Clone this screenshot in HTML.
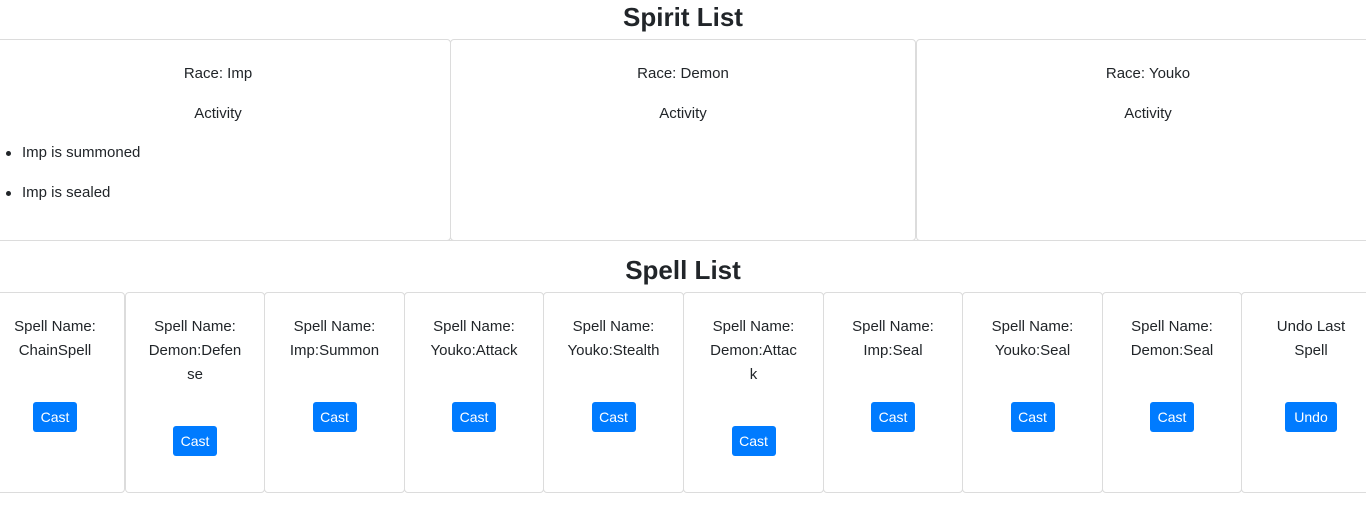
<!DOCTYPE html>
<html><head><style>
body{margin:0;width:1366px;height:508px;overflow:hidden;background:#fff;font-family:"Liberation Sans",sans-serif;color:#212529;position:relative}
h1{position:absolute;left:0;width:1366px;margin:0;text-align:center;font-size:26px;font-weight:bold;line-height:34px}
.card{position:absolute;border:1px solid #dcdcdc;border-radius:4px;box-sizing:border-box;background:#fff}
.t{position:absolute;left:0;right:0;text-align:center;font-size:15px;line-height:24px}
.btn{position:absolute;left:50%;transform:translateX(-50%);background:#007bff;color:#fff;font-size:14px;line-height:30px;height:30px;border-radius:3px;text-align:center}
li{position:absolute;left:22px;font-size:15px;line-height:24px;white-space:nowrap}
li:before{content:"";position:absolute;left:-16px;top:10px;width:5px;height:5px;border-radius:50%;background:#212529}
</style></head><body>
<h1 style="top:0">Spirit List</h1>
<div class="card" style="left:-15px;top:39px;width:466px;height:202px">
<div class="t" style="top:22px">Race: Imp</div>
<div class="t" style="top:62px">Activity</div>
</div>
<div style="position:absolute;left:0;top:0;list-style:none">
<li style="top:141px">Imp is summoned</li>
<li style="top:181px">Imp is sealed</li>
</div>
<div class="card" style="left:450px;top:39px;width:466px;height:202px">
<div class="t" style="top:22px">Race: Demon</div>
<div class="t" style="top:62px">Activity</div>
</div>
<div class="card" style="left:916px;top:39px;width:464px;height:202px">
<div class="t" style="top:22px">Race: Youko</div>
<div class="t" style="top:62px">Activity</div>
</div>
<div style="position:absolute;left:0;top:240px;width:1366px;height:1px;background:#dcdcdc"></div>
<h1 style="top:253px">Spell List</h1>
<div class="card" style="left:-15px;top:292px;width:140px;height:201px"><div class="t" style="top:22px">Spell Name:<br>ChainSpell</div><div class="btn" style="top:109px;width:44px">Cast</div></div>
<div class="card" style="left:125px;top:292px;width:140px;height:201px"><div class="t" style="top:22px">Spell Name:<br>Demon:Defen<br>se</div><div class="btn" style="top:133px;width:44px">Cast</div></div>
<div class="card" style="left:264px;top:292px;width:141px;height:201px"><div class="t" style="top:22px">Spell Name:<br>Imp:Summon</div><div class="btn" style="top:109px;width:44px">Cast</div></div>
<div class="card" style="left:404px;top:292px;width:140px;height:201px"><div class="t" style="top:22px">Spell Name:<br>Youko:Attack</div><div class="btn" style="top:109px;width:44px">Cast</div></div>
<div class="card" style="left:543px;top:292px;width:141px;height:201px"><div class="t" style="top:22px">Spell Name:<br>Youko:Stealth</div><div class="btn" style="top:109px;width:44px">Cast</div></div>
<div class="card" style="left:683px;top:292px;width:141px;height:201px"><div class="t" style="top:22px">Spell Name:<br>Demon:Attac<br>k</div><div class="btn" style="top:133px;width:44px">Cast</div></div>
<div class="card" style="left:823px;top:292px;width:140px;height:201px"><div class="t" style="top:22px">Spell Name:<br>Imp:Seal</div><div class="btn" style="top:109px;width:44px">Cast</div></div>
<div class="card" style="left:962px;top:292px;width:141px;height:201px"><div class="t" style="top:22px">Spell Name:<br>Youko:Seal</div><div class="btn" style="top:109px;width:44px">Cast</div></div>
<div class="card" style="left:1102px;top:292px;width:140px;height:201px"><div class="t" style="top:22px">Spell Name:<br>Demon:Seal</div><div class="btn" style="top:109px;width:44px">Cast</div></div>
<div class="card" style="left:1241px;top:292px;width:140px;height:201px"><div class="t" style="top:22px">Undo Last<br>Spell</div><div class="btn" style="top:109px;width:52px">Undo</div></div>
</body></html>
